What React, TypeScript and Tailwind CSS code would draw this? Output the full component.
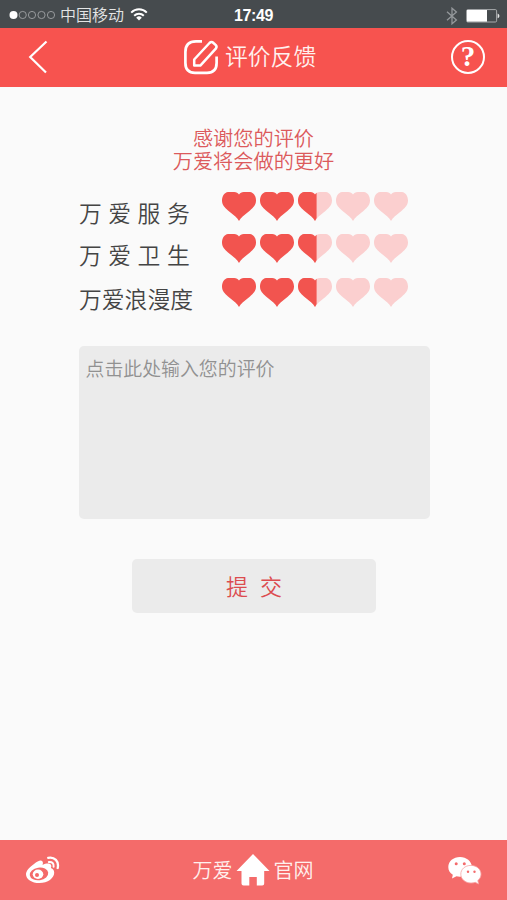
const HEART =
  "M17 2.6 C18 1 19.6 0 21.8 0 H28 C31.6 0.6 34 4 34 8.6 C34 12.8 31.4 15.6 28 18.4 L20.6 24.4 C19 26 17.8 27.4 17 29 C16.2 27.4 15 26 13.4 24.4 L6 18.4 C2.6 15.6 0 12.8 0 8.6 C0 4 2.4 0.6 6 0 H12.2 C14.4 0 16 1 17 2.6 Z";

function Heart({ fill }: { fill: "full" | "half" | "empty" }) {
  return (
    <svg width="34" height="29" viewBox="0 0 34 29" className="shrink-0">
      <path d={HEART} fill={fill === "full" ? "#f2544f" : "#fbcfcf"} />
      {fill === "half" && (
        <svg width="18.6" height="29" viewBox="0 0 18.6 29">
          <path d={HEART} fill="#f2544f" />
        </svg>
      )}
    </svg>
  );
}

function Rating({ label, className }: { label: string; className: string }) {
  return (
    <div className="flex h-[29px] items-start pl-[79px]">
      <span className={`w-[142.500px] shrink-0 whitespace-nowrap pt-[5px] text-[22.800px] leading-[32px] font-[350] text-[#444] ${className}`}>
        {label}
      </span>
      <div className="flex gap-[4.100px]">
        <Heart fill="full" />
        <Heart fill="full" />
        <Heart fill="half" />
        <Heart fill="empty" />
        <Heart fill="empty" />
      </div>
    </div>
  );
}

function StatusBar() {
  return (
    <div className="grid h-7 grid-cols-3 items-center bg-[#464b4e] text-white">
      <div className="flex items-center pl-[9px]">
        <svg width="48" height="10" viewBox="0 0 48 10" fill="none" stroke="#a9acae" strokeWidth="0.8">
          <circle cx="4.5" cy="5" r="4" fill="#fff" stroke="none" />
          <circle cx="13.7" cy="5" r="3.6" />
          <circle cx="23" cy="5" r="3.6" />
          <circle cx="32.5" cy="5" r="3.6" />
          <circle cx="42" cy="5" r="3.6" />
        </svg>
        <span className="-mt-0.5 ml-[3px] whitespace-nowrap text-[16px] leading-7 font-[350] text-[#e4e5e5]">中国移动</span>
        <svg width="18" height="13" viewBox="0 0 18 13" className="-mt-0.5 ml-1.5 shrink-0" fill="none" stroke="#fff" strokeWidth="2">
          <path d="M1.2 4.6a11 11 0 0 1 15.6 0" />
          <path d="M4.2 7.7a6.8 6.8 0 0 1 9.6 0" />
          <path d="M9 12.5 6.2 9.7a4 4 0 0 1 5.6 0Z" fill="#fff" stroke="none" />
        </svg>
      </div>
      <span className="pt-0.5 text-center font-['Liberation_Sans',sans-serif] text-[16px] leading-7 font-bold tracking-[-0.400px]">17:49</span>
      <div className="flex items-center justify-end pt-px pr-[7px]">
        <svg width="12" height="18" viewBox="0 0 12 18" fill="none" stroke="#94989b" strokeWidth="1.3">
          <path d="M1 4.8 10.4 13 6 16.8V1.2L10.4 5 1 13.2" />
        </svg>
        <svg width="34" height="14" viewBox="0 0 34 14" className="ml-2">
          <rect x="0.6" y="0.6" width="30" height="12.4" rx="1.2" fill="none" stroke="#a9acae" />
          <rect x="1" y="1" width="20" height="11.6" fill="#fff" />
          <path d="M31.6 4.5c2.4 0.8 2.4 4 0 4.8Z" fill="#e4e5e5" />
        </svg>
      </div>
    </div>
  );
}

function Header() {
  return (
    <header className="flex h-[59px] items-center bg-[#f7534f] pb-0.5 text-white">
      <svg width="20" height="34" viewBox="0 0 20 34" className="ml-7 shrink-0" fill="none" stroke="#fff" strokeWidth="2.2">
        <path d="M18.5 1.5 2.2 17 18 32.5" />
      </svg>
      <svg width="36" height="36" viewBox="0 0 36 36" className="ml-[135px] shrink-0" fill="none" stroke="#fff" strokeWidth="2.7">
        <path d="M19 2.4H13C6 2.400 2.400 6 2.400 13v11c0 6.500 3 9.800 9.600 9.800h12c6.500 0 9.600-3.300 9.600-9.800V17.500" />
        <path d="M11.200 26.600V20.500L26.500 4Q28.500 2 30.500 4L32.800 6.200Q34.300 7.900 32.800 9.600L17.300 26.600Z" strokeWidth="2.5" strokeLinejoin="round" />
      </svg>
      <h1 className="-mt-0.5 ml-[6px] text-[22.800px] leading-9 font-[350] whitespace-nowrap text-[#fff0ee]">评价反馈</h1>
      <div className="mr-[22px] ml-auto flex size-[34px] items-center justify-center rounded-full border-[2.500px] border-white font-['Liberation_Serif',serif] text-[29px] leading-none font-bold">
        ?
      </div>
    </header>
  );
}

function WeiboIcon() {
  return (
    <svg width="35" height="29" viewBox="0 0 35 29" fill="none">
      <path
        d="M9 8C12.500 5 16 3.800 17.300 5.200C18.200 6.200 18 7.500 17.500 8.900C21 7.400 24.500 7 25.800 8.700C26.600 9.800 26.300 11 25.900 12C28 12.800 29.200 14.300 29.200 16.700C29.200 22 22.800 27 14.500 27C6.600 27 1 23.200 1 18.200C1 14.800 4.500 11.300 9 8Z"
        fill="#fff"
      />
      <ellipse cx="14" cy="17.900" rx="9.300" ry="6.300" fill="#f46b6a" transform="rotate(-8 14 17.900)" />
      <ellipse cx="13" cy="18.300" rx="5.300" ry="4.700" fill="#fff" />
      <circle cx="12" cy="19" r="2" fill="#f46b6a" />
      <path d="M23.200 1.800C29.500 0.500 34.200 5.300 32.700 12" stroke="#fff" strokeWidth="2.300" strokeLinecap="round" />
      <path d="M23.800 6C27 5.400 29.200 7.700 28.600 10.700" stroke="#fff" strokeWidth="2" strokeLinecap="round" />
    </svg>
  );
}

function WechatIcon() {
  return (
    <svg width="34" height="28" viewBox="0 0 34 28">
      <path d="M12 0C5.400 0 0.300 4.300 0.300 10c0 3.400 1.600 6 4.500 7.800L4 21.500l4.500-2.200c5.500 1.400 15.500-1 15.500-9.500C23.500 4.300 18.500 0 12 0Z" fill="#fff" />
      <path d="M23 8.400c-6 0-10.200 3.900-10.200 8.700S17 26 23 26c1.600 0 3-.2 4.200-.7L30.600 27l-.8-3.500c2-1.500 3.200-3.700 3.200-6.400 0-4.800-4.400-8.700-10-8.700Z" fill="#fff" stroke="#f8a5a4" strokeWidth="0.8" />
      <g fill="#f46b6c">
        <circle cx="8.200" cy="6.700" r="1.500" />
        <circle cx="16.300" cy="6.700" r="1.500" />
        <circle cx="20" cy="14.700" r="1.200" />
        <circle cx="26.500" cy="14.700" r="1.200" />
      </g>
    </svg>
  );
}

function Footer() {
  return (
    <footer className="flex h-[60px] items-center justify-between bg-[#f46b6a] pr-[25px] pl-[25px] text-white">
      <WeiboIcon />
      <div className="flex items-center pl-px text-[20px] leading-8 font-[350] text-[#fff0ee]">
        <span className="-ml-[3px]">万爱</span>
        <svg width="34" height="32" viewBox="0 0 34 32" className="mx-[3.500px]" fill="#fff">
          <path d="M17 0 33.500 17H28.200V29.500Q28.200 31.500 26.200 31.500H20.800V23H13.300V31.500H7.500Q5.500 31.500 5.500 29.500V17H0.500Z" />
        </svg>
        <span>官网</span>
      </div>
      <div className="pt-px">
        <WechatIcon />
      </div>
    </footer>
  );
}

export default function App() {
  return (
    <div className="flex h-[900px] w-[507px] flex-col overflow-hidden bg-[#fafafa] font-['Noto_Sans_CJK_SC',sans-serif]">
      <StatusBar />
      <Header />
      <main className="flex flex-1 flex-col">
        <div className="mt-[39px] flex flex-col items-center text-[20.200px] leading-[23px] font-[350] text-[#dc5a5c]">
          <p>感谢您的评价</p>
          <p>万爱将会做的更好</p>
        </div>
        <div className="mt-5 flex flex-col">
          <Rating label="万爱服务" className="tracking-[6.500px]" />
          <div className="mt-[13px]">
            <Rating label="万爱卫生" className="tracking-[6.500px]" />
          </div>
          <div className="mt-[15px]">
            <Rating label="万爱浪漫度" className="tracking-normal" />
          </div>
        </div>
        <textarea
          placeholder="点击此处输入您的评价"
          className="mt-[39px] ml-[79px] h-[173px] w-[351px] resize-none rounded-[5px] bg-[#ebebeb] px-[6.500px] py-[8px] text-[18.900px] leading-7 font-[350] outline-none placeholder:text-[#919191]"
        />
        <button className="mt-10 ml-[132px] h-[54px] w-[244px] rounded-[5px] bg-[#ebebeb] pb-[3px] pl-[12px] text-[22px] leading-8 font-[350] tracking-[12px] text-[#dc4c4f]">
          提交
        </button>
      </main>
      <Footer />
    </div>
  );
}
